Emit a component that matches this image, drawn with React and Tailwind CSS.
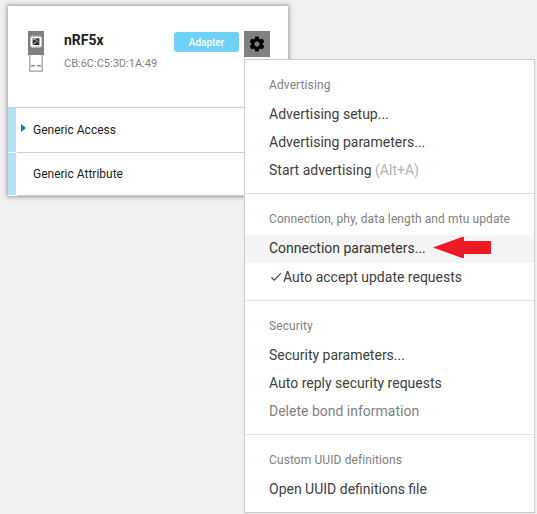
function MenuHeader({ children, tall }) {
  return (
    <div className={`${tall ? "h-[41px]" : "h-10"} pt-4 pl-6 text-xs leading-[18px] tracking-[0.1px] text-[#808080]`}>
      {children}
    </div>
  );
}

function MenuItem({ children, className = "" }) {
  return (
    <div className={`flex h-7 items-center pl-6 text-sm whitespace-nowrap ${className || "text-[#404040]"}`}>
      {children}
    </div>
  );
}

function Divider() {
  return <div className="mt-[9px] h-px bg-[#e0e0e0]" />;
}

function UsbDongle() {
  return (
    <svg width="16" height="41" viewBox="0 0 16 41" className="shrink-0">
      <path d="M0 0h16v24H0z" fill="#808080" />
      <rect x="2.5" y="5.2" width="11" height="11" rx="1.5" fill="none" stroke="#fff" strokeWidth="1" strokeDasharray="1 .7" />
      <rect x="3" y="5.7" width="10" height="10" rx="1.5" fill="#fff" />
      <rect x="4.6" y="7.4" width="6.8" height="6.6" fill="#333" />
      <path d="M4.6 8.2L7.2 8.4L10.6 11.2M4.6 13.4l3.6-2.4" stroke="#ccc" strokeWidth=".9" fill="none" />
      <path d="M1.8 24v16.2h12.4V24" fill="#fff" stroke="#999" strokeWidth="1.2" />
      <path d="M3 34.8h4M9 34.8h4" stroke="#888" strokeWidth="1.6" />
    </svg>
  );
}

function Gear() {
  return (
    <svg width="18" height="18" viewBox="0 0 24 24" fill="#000" className="-mt-px">
      <path d="M19.43 12.98c.04-.32.07-.64.07-.98s-.03-.66-.07-.98l2.11-1.65c.19-.15.24-.42.12-.64l-2-3.46c-.12-.22-.39-.3-.61-.22l-2.49 1c-.52-.4-1.08-.73-1.69-.98l-.38-2.65C14.46 2.18 14.25 2 14 2h-4c-.25 0-.46.18-.49.42l-.38 2.65c-.61.25-1.17.59-1.69.98l-2.49-1c-.23-.09-.49 0-.61.22l-2 3.46c-.13.22-.07.49.12.64l2.11 1.65c-.04.32-.07.65-.07.98s.03.66.07.98l-2.11 1.65c-.19.15-.24.42-.12.64l2 3.46c.12.22.39.3.61.22l2.49-1c.52.4 1.08.73 1.69.98l.38 2.65c.03.24.24.42.49.42h4c.25 0 .46-.18.49-.42l.38-2.65c.61-.25 1.17-.59 1.69-.98l2.49 1c.23.09.49 0 .61-.22l2-3.46c.12-.22.07-.49-.12-.64l-2.11-1.65zM12 15.5c-1.93 0-3.5-1.57-3.5-3.5s1.57-3.5 3.5-3.5 3.5 1.57 3.5 3.5-1.57 3.5-3.5 3.5z" />
    </svg>
  );
}

function Service({ name, expandable, height }) {
  return (
    <div className={`flex ${height} text-xs text-[#222]`}>
      <div className="mb-px w-2 bg-[#b3e1f5]" />
      <div className="ml-px flex flex-1 items-center border-b border-[#ccc]">
        <div className="w-4 pl-1">
          {expandable && (
            <svg width="5" height="8" viewBox="0 0 5 8" className="-mt-1">
              <path d="M0 0L4.8 4L0 8z" fill="#0080b7" />
            </svg>
          )}
        </div>
        <span>{name}</span>
      </div>
    </div>
  );
}

function DeviceCard() {
  return (
    <div className="h-[190px] w-[280px] bg-white shadow-[0_0_4px_1px_rgba(70,70,85,0.5)]">
      <div className="flex h-[102px] items-start border-b border-[#ccc] pt-[25px] pl-5">
        <UsbDongle />
        <div className="ml-5 w-[110px] whitespace-nowrap">
          <div className="text-sm leading-[18px] font-bold text-[#222]">nRF5x</div>
          <div className="mt-[7px] text-[11px] leading-4 text-[#808080]">CB:6C:C5:3D:1A:49</div>
        </div>
        <div className="mt-px flex h-5 w-[65px] items-center justify-center rounded-[3px] bg-[#6fd1f6] text-[10px] font-medium text-white">
          Adapter
        </div>
        <div className="ml-[5px] flex size-[26px] items-center justify-center bg-[#808080]">
          <Gear />
        </div>
      </div>
      <Service name="Generic Access" expandable height="h-[45px]" />
      <Service name="Generic Attribute" height="h-[43px]" />
    </div>
  );
}

function ContextMenu() {
  return (
    <div className="absolute top-[59px] left-[244px] h-[454px] w-[291px] border border-[#ccc] bg-white">
      <MenuHeader>Advertising</MenuHeader>
      <MenuItem>Advertising setup...</MenuItem>
      <MenuItem>Advertising parameters...</MenuItem>
      <MenuItem>
        Start advertising&nbsp;<span className="text-[#b3b3b3]">(Alt+A)</span>
      </MenuItem>
      <Divider />
      <MenuHeader tall>Connection, phy, data length and mtu update</MenuHeader>
      <MenuItem className="bg-[#f4f4f4] pb-0.5 text-[#333]">
        Connection parameters...
        <svg width="60" height="22" viewBox="0 0 60 22" className="ml-[7px]">
          <path d="M0 10.5L29 0h2v4h26q1 0 1 1v11q0 1-1 1H31v4h-2z" fill="#ed1c24" />
        </svg>
      </MenuItem>
      <MenuItem>
        <svg width="14" height="14" viewBox="0 0 14 14" fill="none" stroke="#404040" strokeWidth="1.1">
          <path d="M2.5 7.5L5.2 10.2L11.7 3.5" />
        </svg>
        Auto accept update requests
      </MenuItem>
      <Divider />
      <MenuHeader>Security</MenuHeader>
      <MenuItem>Security parameters...</MenuItem>
      <MenuItem>Auto reply security requests</MenuItem>
      <MenuItem className="text-[#808080]">Delete bond information</MenuItem>
      <Divider />
      <MenuHeader>Custom UUID definitions</MenuHeader>
      <MenuItem>Open UUID definitions file</MenuItem>
    </div>
  );
}

export default function App() {
  return (
    <div className="relative h-[514px] w-[537px] overflow-hidden bg-[#f0f0f0] pt-1.5 pl-2 font-[Roboto,sans-serif]">
      <DeviceCard />
      <ContextMenu />
    </div>
  );
}
